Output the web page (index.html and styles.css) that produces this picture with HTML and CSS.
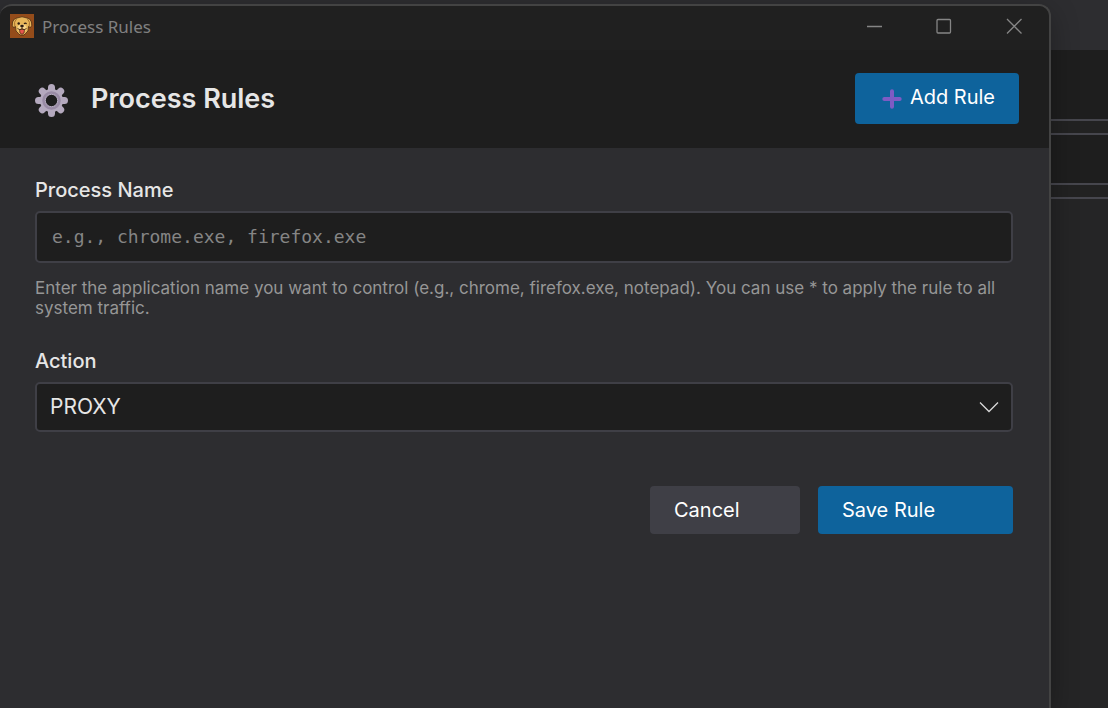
FILE: index.html
```html
<!DOCTYPE html>
<html lang="en">
<head>
<meta charset="utf-8">
<meta name="viewport" content="width=device-width, initial-scale=1">
<title>Process Rules</title>
<link rel="stylesheet" href="styles.css">
</head>
<body>
<div class="desktop">
  <div class="backdrop" aria-hidden="true">
    <div class="backdrop-bar"></div>
    <div class="backdrop-panel"></div>
    <div class="backdrop-strip"></div>
    <div class="backdrop-row"></div>
    <div class="backdrop-strip"></div>
  </div>
  <main class="window">
    <div class="titlebar">
      <svg class="app-icon" viewBox="0 0 24 24" aria-hidden="true">
        <rect width="24" height="24" fill="#944c1a"/>
        <path d="M7 4Q12 1.500 17 4Q20 4 21.500 8Q22.500 12 20.500 13.500L18.500 12.500Q19 18 15.500 19.500L14 21H10L8.500 19.500Q5 18 5.500 12.500L3.500 13.500Q1.500 12 2.500 8Q4 4 7 4Z" fill="#e8b65a" stroke="#47270f" stroke-width=".8"/>
        <path d="M6.500 5Q3.500 8 4.800 12M17.500 5Q20.500 8 19.200 12" fill="none" stroke="#a9702b" stroke-width="1"/>
        <ellipse cx="12" cy="14" rx="4.500" ry="3.500" fill="#f6d48c"/>
        <path d="M9.500 15.500H14.500L14 19Q12 21.500 10 19Z" fill="#e8564e" stroke="#47270f" stroke-width=".7"/>
        <path d="M7.500 14.500Q10 17 12 14.500Q14 17 16.500 14.500M12 12.500V14.500" fill="none" stroke="#47270f" stroke-width=".9"/>
        <ellipse cx="12" cy="12" rx="1.800" ry="1.200" fill="#2a1a12"/>
        <circle cx="8.700" cy="9.500" r="1.200" fill="#2a1a12"/>
        <path d="M14 9.800Q15.300 8.600 16.600 9.800" fill="none" stroke="#2a1a12" stroke-width="1.200"/>
      </svg>
      <span class="titlebar-text">Process Rules</span>
      <div class="window-controls">
        <button class="window-button" aria-label="Minimize"><svg viewBox="0 0 16 16"><path d="M1 8.500H16"/></svg></button>
        <button class="window-button" aria-label="Maximize"><svg viewBox="0 0 16 16"><rect x="1" y="1.500" width="13.500" height="13.500" rx="1"/></svg></button>
        <button class="window-button" aria-label="Close"><svg viewBox="0 0 16 16"><path d="M1 1l14.500 14.500M15.500 1L1 15.500"/></svg></button>
      </div>
    </div>
    <header class="header">
      <svg class="gear" viewBox="0 0 34 34" aria-hidden="true">
        <g stroke="#b4a9be" stroke-width="7" stroke-linecap="round">
          <path d="M16.500 3.500V29.500M3.500 16.500H29.500M7.300 7.300L25.700 25.700M25.700 7.300L7.300 25.700"/>
        </g>
        <circle cx="16.500" cy="16.500" r="11.500" fill="#b4a9be"/>
        <circle cx="16.500" cy="16.500" r="8" fill="none" stroke="#998ba5" stroke-width="2.500"/>
        <circle cx="16.500" cy="16.500" r="6.200" fill="#1e1e1e" stroke="#b4a9be" stroke-width="1"/>
      </svg>
      <h1 class="heading">Process Rules</h1>
      <button class="button button-add">
        <svg class="plus" viewBox="0 0 20 20" aria-hidden="true"><path d="M10 2.300V17.700M2.300 10H17.700"/></svg>
        <span>Add Rule</span>
      </button>
    </header>
    <form class="form">
      <label class="label" for="process-name">Process Name</label>
      <input class="field name-field" id="process-name" type="text" placeholder="e.g., chrome.exe, firefox.exe" aria-describedby="process-hint">
      <p class="hint" id="process-hint">Enter the application name you want to control (e.g., chrome, firefox.exe, notepad). You can use * to apply the rule to all system traffic.</p>
      <label class="label" for="action">Action</label>
      <div class="select-wrap">
        <select class="field select-field" id="action">
          <option>PROXY</option>
        </select>
        <svg class="chevron" viewBox="0 0 20 12" aria-hidden="true"><path d="M1 1.500L10 10.500L19 1.500"/></svg>
      </div>
      <div class="actions">
        <button class="button button-cancel" type="button">Cancel</button>
        <button class="button button-save" type="button">Save Rule</button>
      </div>
    </form>
  </main>
</div>
</body>
</html>
```
FILE: styles.css
```css
* {
  box-sizing: border-box;
}

body {
  margin: 0;
  font-family: Inter, "Liberation Sans", sans-serif;
  color: #e6e6e6;
  background: #252526;
}

.desktop {
  position: relative;
  display: flex;
  min-height: 100vh;
  padding: 4px 57px 0 0;
  overflow: hidden;
}

.backdrop {
  position: absolute;
  inset: 0;
}

.backdrop-bar {
  height: 50px;
  background: #2d2d30;
}

.backdrop-panel {
  height: 69px;
  background: #1e1e1e;
}

.backdrop-strip {
  height: 16px;
  border-top: 2px solid #46464d;
  border-bottom: 2px solid #46464d;
  background: #222222;
}

.backdrop-row {
  height: 48px;
  background: #1e1e1e;
}

.window {
  position: relative;
  flex: 1;
  display: flex;
  flex-direction: column;
  border: 2px solid #434343;
  border-left: 0;
  border-bottom: 0;
  border-radius: 12px 12px 0 0;
  background: #2d2d30;
  box-shadow: 0 8px 28px rgba(0, 0, 0, 0.3);
  overflow: hidden;
}

.titlebar {
  display: flex;
  align-items: center;
  height: 44px;
  padding: 0 0 4px 10px;
  background: #202020;
}

.app-icon {
  width: 24px;
  height: 24px;
}

.titlebar-text {
  margin-left: 8px;
  font-family: "Noto Sans", "Open Sans", sans-serif;
  font-size: 17px;
  color: #808080;
}

.window-controls {
  display: flex;
  margin-left: auto;
}

.window-button {
  display: flex;
  align-items: center;
  justify-content: center;
  width: 70px;
  height: 40px;
  padding: 0;
  border: 0;
  background: none;
}

.window-button svg {
  width: 16px;
  height: 16px;
  fill: none;
  stroke: #858585;
  stroke-width: 1.3;
}

.header {
  display: flex;
  align-items: center;
  height: 98px;
  padding: 0 30px 0 35px;
  background: #1e1e1e;
}

.gear {
  width: 34px;
  height: 34px;
  margin-top: 4px;
}

.heading {
  margin: 0 0 0 22px;
  font-size: 27px;
  line-height: 32px;
  font-weight: 600;
}

.button {
  border: 0;
  border-radius: 4px;
  font-family: inherit;
  font-size: 20px;
  text-align: left;
  color: #ffffff;
  background: #0e639c;
}

.button-add {
  display: flex;
  align-items: center;
  gap: 8px;
  height: 51px;
  margin: 0 0 2px auto;
  padding: 0 24px 2px 27px;
}

.plus {
  width: 20px;
  height: 20px;
  margin-top: 4px;
  fill: none;
  stroke: #7e5bc4;
  stroke-width: 4;
  stroke-linecap: round;
}

.form {
  display: flex;
  flex-direction: column;
  padding: 30px 36px 30px 35px;
}

.label {
  margin-bottom: 9px;
  font-size: 20px;
  line-height: 24px;
  font-weight: 500;
}

.field {
  width: 100%;
  border: 2px solid #3f3f46;
  border-radius: 5px;
  background: #1e1e1e;
  color: #e6e6e6;
}

.name-field {
  height: 52px;
  padding: 0 15px 2px;
  font-family: "DejaVu Sans Mono", monospace;
  font-size: 18px;
}

.name-field::placeholder {
  color: #858585;
  opacity: 1;
}

.hint {
  margin: 15px 0 31px;
  font-size: 17px;
  line-height: 20px;
  color: #969696;
}

.select-wrap {
  position: relative;
}

.select-field {
  display: block;
  height: 50px;
  padding: 0 13px 2px;
  appearance: none;
  font-family: inherit;
  font-size: 21px;
}

.chevron {
  position: absolute;
  top: 19px;
  right: 14px;
  width: 20px;
  height: 12px;
  fill: none;
  stroke: #d8d8d8;
  stroke-width: 1.3;
  pointer-events: none;
}

.actions {
  display: flex;
  justify-content: flex-end;
  gap: 18px;
  margin-top: 54px;
}

.button-cancel,
.button-save {
  height: 48px;
  padding: 0 24px;
}

.button-cancel {
  width: 150px;
  background: #3f3f46;
}

.button-save {
  width: 195px;
}
```
